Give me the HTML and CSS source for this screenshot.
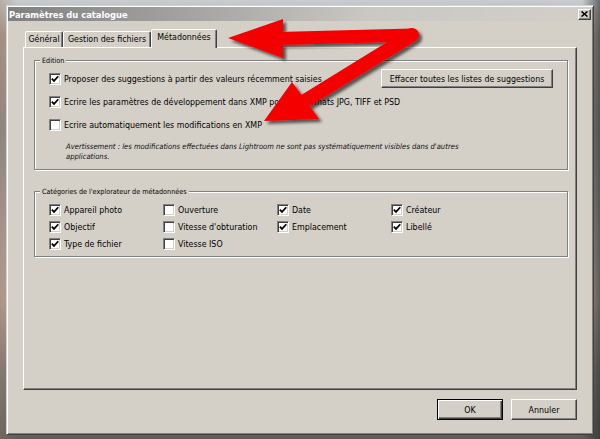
FILE: index.html
```html
<!DOCTYPE html>
<html lang="fr">
<head>
<meta charset="utf-8">
<title>Paramètres du catalogue</title>
<link rel="stylesheet" href="styles.css">
</head>
<body>
<div class="window">
  <div class="titlebar">
    <span class="title">Paramètres du catalogue</span>
    <span class="close"><svg width="7" height="6" viewBox="0 0 7 6"><path d="M0.5 0.5 L6.5 5.5 M6.5 0.5 L0.5 5.5" stroke="#000" stroke-width="1.6"/></svg></span>
  </div>
  <div class="content">
    <div class="tabs">
      <div class="tab tab-general">Général</div>
      <div class="tab tab-files">Gestion des fichiers</div>
      <div class="tab tab-meta active">Métadonnées</div>
    </div>
    <div class="panel">
      <fieldset class="group">
        <legend>Edition</legend>
        <div class="group-body edition">
          <div class="row row-first">
            <label class="check"><span class="cb"><svg width="10" height="10" viewBox="0 0 10 10"><path d="M1.8 4.6 L4 6.9 L8.3 2.2" fill="none" stroke="#000" stroke-width="1.7"/></svg></span>Proposer des suggestions à partir des valeurs récemment saisies</label>
            <button class="btn btn-wide">Effacer toutes les listes de suggestions</button>
          </div>
          <div class="row">
            <label class="check"><span class="cb"><svg width="10" height="10" viewBox="0 0 10 10"><path d="M1.8 4.6 L4 6.9 L8.3 2.2" fill="none" stroke="#000" stroke-width="1.7"/></svg></span>Ecrire les paramètres de développement dans XMP pour les formats JPG, TIFF et PSD</label>
          </div>
          <div class="row">
            <label class="check"><span class="cb"></span>Ecrire automatiquement les modifications en XMP</label>
          </div>
          <p class="note">Avertissement : les modifications effectuées dans Lightroom ne sont pas systématiquement visibles dans d'autres<br>applications.</p>
        </div>
      </fieldset>
      <fieldset class="group group-cats">
        <legend>Catégories de l'explorateur de métadonnées</legend>
        <div class="group-body cats">
          <label class="check"><span class="cb"><svg width="10" height="10" viewBox="0 0 10 10"><path d="M1.8 4.6 L4 6.9 L8.3 2.2" fill="none" stroke="#000" stroke-width="1.7"/></svg></span>Appareil photo</label>
          <label class="check"><span class="cb"></span>Ouverture</label>
          <label class="check"><span class="cb"><svg width="10" height="10" viewBox="0 0 10 10"><path d="M1.8 4.6 L4 6.9 L8.3 2.2" fill="none" stroke="#000" stroke-width="1.7"/></svg></span>Date</label>
          <label class="check"><span class="cb"><svg width="10" height="10" viewBox="0 0 10 10"><path d="M1.8 4.6 L4 6.9 L8.3 2.2" fill="none" stroke="#000" stroke-width="1.7"/></svg></span>Créateur</label>
          <label class="check"><span class="cb"><svg width="10" height="10" viewBox="0 0 10 10"><path d="M1.8 4.6 L4 6.9 L8.3 2.2" fill="none" stroke="#000" stroke-width="1.7"/></svg></span>Objectif</label>
          <label class="check"><span class="cb"></span>Vitesse d'obturation</label>
          <label class="check"><span class="cb"><svg width="10" height="10" viewBox="0 0 10 10"><path d="M1.8 4.6 L4 6.9 L8.3 2.2" fill="none" stroke="#000" stroke-width="1.7"/></svg></span>Emplacement</label>
          <label class="check"><span class="cb"><svg width="10" height="10" viewBox="0 0 10 10"><path d="M1.8 4.6 L4 6.9 L8.3 2.2" fill="none" stroke="#000" stroke-width="1.7"/></svg></span>Libellé</label>
          <label class="check"><span class="cb"><svg width="10" height="10" viewBox="0 0 10 10"><path d="M1.8 4.6 L4 6.9 L8.3 2.2" fill="none" stroke="#000" stroke-width="1.7"/></svg></span>Type de fichier</label>
          <label class="check"><span class="cb"></span>Vitesse ISO</label>
        </div>
      </fieldset>
    </div>
    <div class="footer">
      <button class="btn btn-default">OK</button>
      <button class="btn">Annuler</button>
    </div>
  </div>
</div>
<svg class="arrows" width="600" height="439" viewBox="0 0 600 439">
  <defs>
    <filter id="shadow" x="-10%" y="-10%" width="130%" height="130%">
      <feDropShadow dx="3" dy="3" stdDeviation="1.8" flood-color="#000" flood-opacity="0.6"/>
    </filter>
  </defs>
  <g filter="url(#shadow)">
    <path d="M278 38.5 L412 35" stroke="#f40000" stroke-width="13" stroke-linecap="round" fill="none"/>
    <path d="M412 35 L300 104" stroke="#f40000" stroke-width="14" stroke-linecap="round" fill="none"/>
    <polygon points="228,38 283,19 283,58" fill="#f40000"/>
    <polygon points="264,121 292,82 319,119" fill="#f40000"/>
  </g>
</svg>
</body>
</html>
```
FILE: styles.css
```css
* {
  box-sizing: border-box;
}

html,
body {
  margin: 0;
}

body {
  width: 600px;
  height: 439px;
  overflow: hidden;
  position: relative;
  font-family: "DejaVu Sans Condensed", "DejaVu Sans", sans-serif;
  font-stretch: condensed;
  font-size: 8.8px;
  color: #000;
  background:
    linear-gradient(to right, rgba(150, 120, 100, 0.35), rgba(0, 0, 0, 0) 3%, rgba(0, 0, 0, 0) 97%, rgba(40, 40, 40, 0.6)),
    linear-gradient(to bottom, #c9ccd0 0%, #a89d90 8%, #8e8c8a 30%, #a9a39c 55%, #b9a69a 68%, #7b7874 85%, #5e5d5b 100%);
}

.window {
  margin: 5px 0 0 6px;
  width: 588px;
  height: 430px;
  padding: 1px;
  display: flex;
  flex-direction: column;
  background: #d4d0c8;
  border: 1px solid;
  border-color: #d4d0c8 #404040 #404040 #d4d0c8;
  box-shadow: inset 1px 1px 0 #fff, inset -1px -1px 0 #808080;
}

.titlebar {
  height: 14px;
  display: flex;
  align-items: center;
  justify-content: space-between;
  padding: 0 1px 0 1px;
  background: linear-gradient(to right, #808080 0%, #a9a8a6 35%, #cac8c3 62%, #d2cfc9 100%);
}

.title {
  color: #fff;
  font-weight: bold;
  font-size: 9.3px;
}

.close {
  width: 13px;
  height: 11px;
  display: flex;
  align-items: center;
  justify-content: center;
  background: #d4d0c8;
  border: 1px solid;
  border-color: #fff #404040 #404040 #fff;
  box-shadow: inset -1px -1px 0 #808080;
}

.content {
  flex: 1;
  display: flex;
  flex-direction: column;
  padding: 8px 15px 0;
}

.tabs {
  height: 18px;
  display: flex;
  align-items: flex-end;
  padding-left: 2px;
  position: relative;
  z-index: 1;
}

.tab {
  height: 16px;
  line-height: 14px;
  text-align: center;
  white-space: nowrap;
  background: #d4d0c8;
  border: 1px solid;
  border-bottom: 0;
  border-color: #fff #404040 transparent #fff;
  border-radius: 2px 2px 0 0;
  box-shadow: inset -1px 0 0 #808080;
}

.tab-general {
  width: 38px;
}

.tab-files {
  width: 88px;
}

.tab-meta {
  width: 66px;
}

.tab.active {
  height: 19px;
  margin-bottom: -1px;
  line-height: 15px;
}

.panel {
  height: 343px;
  padding: 6px 8px 0 10px;
  border: 1px solid;
  border-color: #fff #404040 #404040 #fff;
  box-shadow: inset -1px -1px 0 #808080;
}

.group {
  margin: 0;
  padding: 0;
  min-width: 0;
  border: 1px solid #808080;
  box-shadow: inset 1px 1px 0 #fff, 1px 1px 0 #fff;
}

.group legend {
  margin-left: 5px;
  padding: 0 2px;
  line-height: 13px;
  font-size: 7.2px;
  background: #d4d0c8;
}

.group-cats {
  margin-top: 15px;
}

.edition {
  padding: 0 14px 7px 14px;
}

.row {
  height: 23px;
  display: flex;
  align-items: center;
}

.row-first {
  justify-content: space-between;
}

.check {
  display: flex;
  align-items: center;
  gap: 3px;
  white-space: nowrap;
}

.cb {
  width: 12px;
  height: 12px;
  flex: none;
  display: flex;
  align-items: center;
  justify-content: center;
  background: #fff;
  border: 1px solid;
  border-color: #808080 #fff #fff #808080;
  box-shadow: inset 1px 1px 0 #404040, inset -1px -1px 0 #d4d0c8;
}

.note {
  margin: 6px 0 0 17px;
  font-size: 7.6px;
  font-style: italic;
  line-height: 10px;
  color: #111;
}

.cats {
  display: grid;
  grid-template-columns: repeat(4, 114px);
  grid-auto-rows: 17px;
  align-items: center;
  padding: 3px 0 4px 14px;
}

.footer {
  display: flex;
  justify-content: flex-end;
  gap: 8px;
  margin-top: 9px;
}

.btn {
  width: 66px;
  height: 21px;
  padding: 0;
  font: inherit;
  color: #000;
  background: #d4d0c8;
  border: 1px solid;
  border-color: #fff #404040 #404040 #fff;
  box-shadow: inset -1px -1px 0 #808080;
}

.btn-wide {
  width: 172px;
  height: 19px;
}

.btn-default {
  border-color: #000;
  box-shadow: inset 1px 1px 0 #fff, inset -1px -1px 0 #404040, inset -2px -2px 0 #808080;
}

.arrows {
  position: absolute;
  left: 0;
  top: 0;
  pointer-events: none;
}
```
